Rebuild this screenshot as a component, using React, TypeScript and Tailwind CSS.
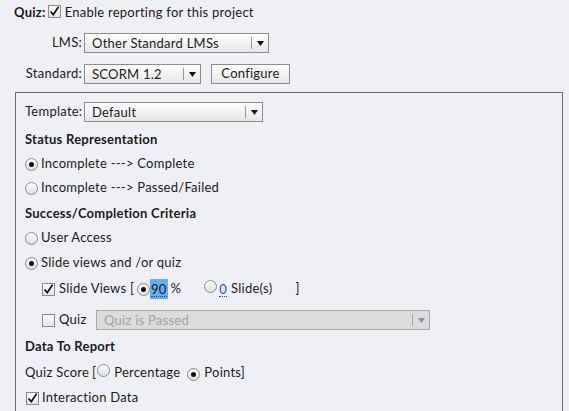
import React from "react";

function Check({ checked = false }: { checked?: boolean }) {
  return (
    <span className="inline-flex h-[13px] w-[13px] shrink-0 items-center justify-center border border-[#8a8a8a] bg-gradient-to-b from-white to-[#e4e4e4]">
      {checked && (
        <svg width="11" height="11" viewBox="0 0 11 11">
          <path d="M1.5 5.5 L4.3 8.6 L9.6 0.8" fill="none" stroke="#111" strokeWidth="1.7" />
        </svg>
      )}
    </span>
  );
}

function Radio({ on = false }: { on?: boolean }) {
  return (
    <span className="inline-flex h-[13px] w-[13px] shrink-0 items-center justify-center rounded-full border border-[#8a8a8a] bg-gradient-to-b from-white to-[#dedede]">
      {on && <span className="h-[5px] w-[5px] rounded-full bg-[#111]" />}
    </span>
  );
}

function Select({
  value,
  width,
  disabled = false,
}: {
  value: string;
  width: string;
  disabled?: boolean;
}) {
  return (
    <div
      className={`flex h-[20px] items-center border ${width} ${
        disabled
          ? "border-[#a9a9a9] bg-[#dcdcdc] text-[#a3a3a3]"
          : "border-[#8c8c8c] bg-gradient-to-b from-white to-[#e6e6e6]"
      }`}
    >
      <span className="flex-1 whitespace-nowrap pl-[7px] leading-[18px]">{value}</span>
      <span className={`h-[12px] w-px ${disabled ? "bg-[#a8a8a8]" : "bg-[#9a9a9a]"}`} />
      <span className="flex w-[16px] justify-center">
        <svg width="7" height="5" viewBox="0 0 7 5">
          <path d="M0 0 H7 L3.5 5 Z" fill={disabled ? "#8f8f8f" : "#111"} />
        </svg>
      </span>
    </div>
  );
}

function Row({ children, className = "" }: { children: React.ReactNode; className?: string }) {
  return <div className={`flex h-[24px] items-center ${className}`}>{children}</div>;
}

export default function App() {
  return (
    <div className="min-h-screen overflow-hidden bg-[#eff0f5] font-[Lato,sans-serif] text-[13px] tracking-[0.25px] text-[#1b1b1b]">
      <div className="flex h-[26px] items-center pl-[14px]">
        <span className="font-bold">Quiz:</span>
        <span className="ml-[2px]">
          <Check checked />
        </span>
        <span className="ml-[4px]">Enable reporting for this project</span>
      </div>

      <div className="mt-[7px] flex items-center">
        <span className="w-[82px] text-right">LMS:</span>
        <span className="ml-[2px]">
          <Select value="Other Standard LMSs" width="w-[185px]" />
        </span>
      </div>

      <div className="mt-[11px] flex items-center">
        <span className="w-[82px] text-right">Standard:</span>
        <span className="ml-[2px]">
          <Select value="SCORM 1.2" width="w-[117px]" />
        </span>
        <button className="ml-[10px] flex h-[20px] w-[79px] items-center justify-center border border-[#8c8c8c] bg-gradient-to-b from-white to-[#e6e6e6]">
          Configure
        </button>
      </div>

      <div className="ml-[15px] mt-[8px] h-[330px] w-[548px] border border-b-0 border-[#6c6c6c] pl-[9px]">
        <div className="mt-[9px] flex items-center">
          <span className="w-[57px]">Template:</span>
          <span className="ml-[2px]">
            <Select value="Default" width="w-[179px]" />
          </span>
        </div>

        <Row className="mt-[6px] font-bold">Status Representation</Row>
        <Row>
          <Radio on />
          <span className="ml-[3px]">Incomplete ---&gt; Complete</span>
        </Row>
        <Row>
          <Radio />
          <span className="ml-[3px]">Incomplete ---&gt; Passed/Failed</span>
        </Row>

        <Row className="mt-[2px] font-bold">Success/Completion Criteria</Row>
        <Row>
          <Radio />
          <span className="ml-[3px]">User Access</span>
        </Row>
        <Row className="mt-[1px]">
          <Radio on />
          <span className="ml-[3px]">Slide views and /or quiz</span>
        </Row>

        <Row className="mt-[2px] pl-[17px]">
          <Check checked />
          <span className="ml-[4px] w-[78px]">Slide Views [</span>
          <Radio on />
          <span className="flex h-[20px] items-center bg-[#65aef0] px-[1px]">
            <span className="border-b border-dotted border-[#1d4fb0] leading-[14px]">90</span>
          </span>
          <span className="ml-[3px]">%</span>
          <span className="ml-[23px]">
            <Radio />
          </span>
          <span className="ml-[2px] border-b border-dotted border-[#1d4fb0] leading-[14px] text-[#1d56c9]">0</span>
          <span className="ml-[4px]">Slide(s)</span>
          <span className="ml-[23px]">]</span>
        </Row>

        <div className="mt-[9px] flex h-[20px] items-center pl-[17px]">
          <Check />
          <span className="ml-[4px] w-[37px]">Quiz</span>
          <Select value="Quiz is Passed" width="w-[334px]" disabled />
        </div>

        <Row className="mt-[5px] font-bold">Data To Report</Row>
        <Row className="mt-[2px]">
          <span className="w-[67px]">Quiz Score</span>
          <span>[</span>
          <span className="ml-[1px]">
            <Radio />
          </span>
          <span className="ml-[4px]">Percentage</span>
          <span className="ml-[7px]">
            <Radio on />
          </span>
          <span className="ml-[4px]">Points]</span>
        </Row>
        <Row className="mt-[1px] pl-[1px]">
          <Check checked />
          <span className="ml-[3px]">Interaction Data</span>
        </Row>
      </div>
    </div>
  );
}
